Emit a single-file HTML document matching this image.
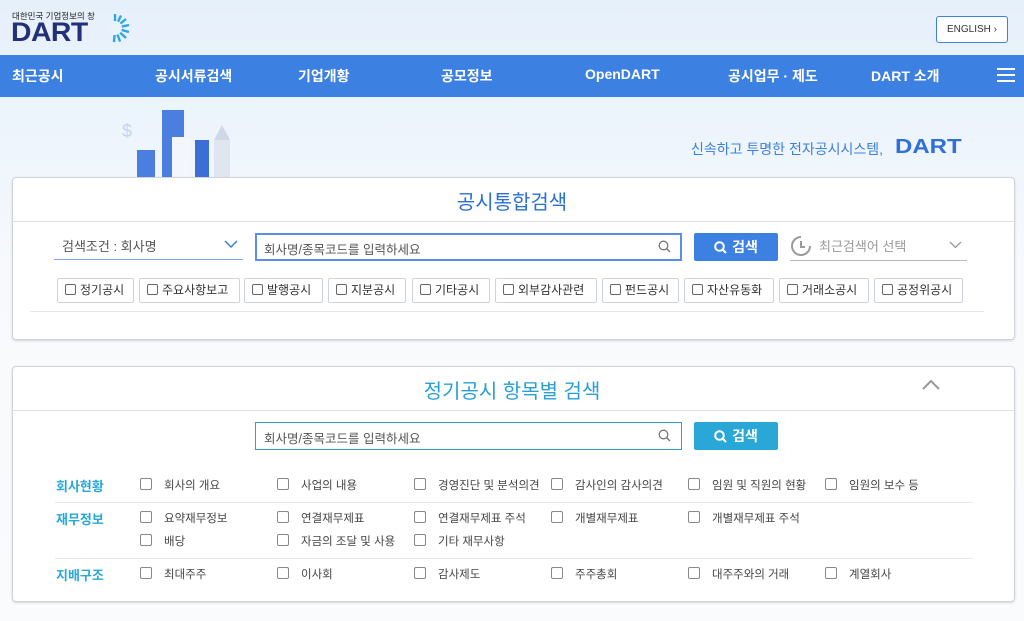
<!DOCTYPE html>
<html><head><meta charset="utf-8"><style>
*{box-sizing:border-box;margin:0;padding:0}
body{width:1024px;height:621px;overflow:hidden;font-family:"Liberation Sans","Noto Sans CJK KR",sans-serif;background:linear-gradient(#e6f0fb 0,#eef5fc 150px,#f7f9fc 260px,#fafbfd 621px);position:relative;color:#333}
.abs{position:absolute}
.nav{left:0;top:55px;width:1024px;height:42px;background:#3c80e2;color:#fff;font-size:14px;font-weight:bold}
.nav span{position:absolute;top:11px}
.card{position:absolute;left:12px;width:1003px;background:#fff;border:1px solid #cfd4db;border-radius:4px;box-shadow:0 1px 2px rgba(0,0,0,.15)}
.title{position:absolute;left:0;width:100%;text-align:center;font-size:20px;color:#2a6fd6}
.fb{position:absolute;top:278px;height:25px;border:1px solid #cfd4db;border-radius:2px;font-size:12px;color:#333;line-height:23px;padding-left:7px;background:#fff}
.cb{display:inline-block;width:11px;height:11px;border:1px solid #666;border-radius:2px;vertical-align:-1px;margin-right:4px}
.it{position:absolute;font-size:11.5px;color:#444}
.it .cb{width:12px;height:12px;border-color:#888;margin-right:12px}
.lb{position:absolute;left:56px;font-size:13px;font-weight:bold;color:#29a8d8}
.btn{position:absolute;height:28px;color:#fff;font-size:14px;font-weight:bold;text-align:center;line-height:28px;border-radius:2px}
.btn svg{vertical-align:-2px;margin-right:5px}
.inp{position:absolute;width:427px;height:28px;background:#fff;font-size:12.5px;color:#555;padding:4px 0 0 7px}
</style></head><body>
<div class="abs" style="left:12px;top:10px;font-size:8.5px;color:#222">대한민국 기업정보의 창</div>
<div class="abs" style="left:11px;top:21px;font-size:27px;font-weight:900;color:#22307a;letter-spacing:-0.5px;line-height:22px;transform:scaleX(1.05);transform-origin:left">DART</div>
<svg class="abs" style="left:100px;top:13px" width="30" height="30" viewBox="0 0 30 30"><g stroke="#2fa6e0" stroke-width="2.4">
<line x1="15" y1="15" x2="15" y2="1"/><line x1="15" y1="15" x2="21" y2="2.5"/><line x1="15" y1="15" x2="26" y2="6"/><line x1="15" y1="15" x2="29" y2="12"/><line x1="15" y1="15" x2="29" y2="19"/><line x1="15" y1="15" x2="26" y2="25"/><line x1="15" y1="15" x2="20" y2="28.5"/><line x1="15" y1="15" x2="14" y2="29"/></g><circle cx="15" cy="15" r="7" fill="#eaf2fb"/></svg>
<div class="abs" style="left:936px;top:16px;width:72px;height:27px;border:1px solid #3c80e2;border-radius:3px;background:#fff;font-size:10px;color:#333;text-align:center;line-height:25px">ENGLISH ›</div>
<div class="abs nav"><span style="left:12px">최근공시</span><span style="left:155px">공시서류검색</span><span style="left:298px">기업개황</span><span style="left:441px">공모정보</span><span style="left:585px">OpenDART</span><span style="left:728px">공시업무 · 제도</span><span style="left:871px">DART 소개</span>
<span style="left:997px;top:13px;width:18px;height:2px;background:#fff;box-shadow:0 6px 0 #fff,0 12px 0 #fff"></span></div>
<svg class="abs" style="left:110px;top:105px" width="150" height="72"><g fill="#4a7fe0"><rect x="52" y="5" width="22" height="67"/><rect x="27" y="45" width="18" height="27"/><rect x="85" y="35" width="14" height="37" fill="#3b6fd6"/></g><rect x="62" y="32" width="18" height="40" fill="#f3f6fb"/><rect x="104" y="35" width="16" height="37" fill="#dfe6f0"/><polygon points="104,35 112,20 120,35" fill="#cfd8e6"/><text x="12" y="32" font-size="18" fill="#c5d3ec" font-family="Liberation Sans">$</text></svg>
<div class="abs" style="left:691px;top:139px;font-size:14px;color:#3c7fdc">신속하고 투명한 전자공시시스템,</div>
<div class="abs" style="left:895px;top:136px;font-size:20px;font-weight:900;color:#2f6fd8;transform:scaleX(1.2);transform-origin:left">DART</div>

<div class="card" style="top:177px;height:163px"></div>
<div class="title" style="top:186px">공시통합검색</div>
<div class="abs" style="left:13px;top:221px;width:1001px;height:1px;background:#dde1e6"></div>
<div class="abs" style="left:62px;top:236px;font-size:13px;color:#555">검색조건 : 회사명</div>
<svg class="abs" style="left:224px;top:240px" width="14" height="9"><path d="M1 1 L7 7 L13 1" fill="none" stroke="#3c7fdc" stroke-width="1.5"/></svg>
<div class="abs" style="left:54px;top:259px;width:189px;height:1px;background:#7ea6e6"></div>
<div class="inp" style="left:255px;top:233px;border:2px solid #5b8ee6">회사명/종목코드를 입력하세요</div>
<svg class="abs" style="left:658px;top:240px" width="13" height="13"><circle cx="5.5" cy="5.5" r="4.3" fill="none" stroke="#777" stroke-width="1.3"/><line x1="8.5" y1="8.5" x2="12" y2="12" stroke="#777" stroke-width="1.4"/></svg>
<div class="btn" style="left:694px;top:233px;width:84px;background:#3c80e2"><svg width="13" height="13"><circle cx="5.5" cy="5.5" r="4.3" fill="none" stroke="#fff" stroke-width="2"/><line x1="8.5" y1="8.5" x2="12" y2="12" stroke="#fff" stroke-width="2"/></svg>검색</div>
<svg class="abs" style="left:790px;top:235px" width="22" height="22"><path d="M11 2 A9 9 0 1 0 20 11" fill="none" stroke="#9a9a9a" stroke-width="2"/><path d="M11 6 V12 H15" fill="none" stroke="#9a9a9a" stroke-width="2"/></svg>
<div class="abs" style="left:819px;top:236px;font-size:13px;color:#999">최근검색어 선택</div>
<svg class="abs" style="left:949px;top:241px" width="13" height="8"><path d="M1 1 L6.5 6.5 L12 1" fill="none" stroke="#999" stroke-width="1.3"/></svg>
<div class="abs" style="left:790px;top:260px;width:177px;height:1px;background:#bbb"></div>
<div class="fb" style="left:57px;width:77px"><i class="cb"></i>정기공시</div>
<div class="fb" style="left:139px;width:101px"><i class="cb"></i>주요사항보고</div>
<div class="fb" style="left:244px;width:79px"><i class="cb"></i>발행공시</div>
<div class="fb" style="left:328px;width:78px"><i class="cb"></i>지분공시</div>
<div class="fb" style="left:412px;width:78px"><i class="cb"></i>기타공시</div>
<div class="fb" style="left:495px;width:102px"><i class="cb"></i>외부감사관련</div>
<div class="fb" style="left:602px;width:77px"><i class="cb"></i>펀드공시</div>
<div class="fb" style="left:684px;width:90px"><i class="cb"></i>자산유동화</div>
<div class="fb" style="left:779px;width:90px"><i class="cb"></i>거래소공시</div>
<div class="fb" style="left:874px;width:89px"><i class="cb"></i>공정위공시</div>
<div class="abs" style="left:30px;top:311px;width:954px;height:1px;background:#e3e6ea"></div>

<div class="card" style="top:366px;height:236px"></div>
<div class="title" style="top:375px;color:#2a9fd6">정기공시 항목별 검색</div>
<svg class="abs" style="left:922px;top:380px" width="18" height="10"><path d="M1 9 L9 1 L17 9" fill="none" stroke="#999" stroke-width="2"/></svg>
<div class="abs" style="left:13px;top:410px;width:1001px;height:1px;background:#dde1e6"></div>
<div class="inp" style="left:255px;top:422px;border:1px solid #2aa0d6;padding:5px 0 0 8px">회사명/종목코드를 입력하세요</div>
<svg class="abs" style="left:658px;top:429px" width="13" height="13"><circle cx="5.5" cy="5.5" r="4.3" fill="none" stroke="#777" stroke-width="1.3"/><line x1="8.5" y1="8.5" x2="12" y2="12" stroke="#777" stroke-width="1.4"/></svg>
<div class="btn" style="left:694px;top:422px;width:84px;background:#29a8d8"><svg width="13" height="13"><circle cx="5.5" cy="5.5" r="4.3" fill="none" stroke="#fff" stroke-width="2"/><line x1="8.5" y1="8.5" x2="12" y2="12" stroke="#fff" stroke-width="2"/></svg>검색</div>

<div class="lb" style="top:476px">회사현황</div>
<div class="lb" style="top:509px">재무정보</div>
<div class="lb" style="top:565px">지배구조</div>
<div class="abs" style="left:55px;top:502px;width:918px;height:1px;background:#e3e6ea"></div>
<div class="abs" style="left:55px;top:558px;width:918px;height:1px;background:#e3e6ea"></div>

<div class="it" style="left:140px;top:477px"><i class="cb"></i>회사의 개요</div>
<div class="it" style="left:277px;top:477px"><i class="cb"></i>사업의 내용</div>
<div class="it" style="left:414px;top:477px"><i class="cb"></i>경영진단 및 분석의견</div>
<div class="it" style="left:551px;top:477px"><i class="cb"></i>감사인의 감사의견</div>
<div class="it" style="left:688px;top:477px"><i class="cb"></i>임원 및 직원의 현황</div>
<div class="it" style="left:825px;top:477px"><i class="cb"></i>임원의 보수 등</div>
<div class="it" style="left:140px;top:510px"><i class="cb"></i>요약재무정보</div>
<div class="it" style="left:277px;top:510px"><i class="cb"></i>연결재무제표</div>
<div class="it" style="left:414px;top:510px"><i class="cb"></i>연결재무제표 주석</div>
<div class="it" style="left:551px;top:510px"><i class="cb"></i>개별재무제표</div>
<div class="it" style="left:688px;top:510px"><i class="cb"></i>개별재무제표 주석</div>
<div class="it" style="left:140px;top:533px"><i class="cb"></i>배당</div>
<div class="it" style="left:277px;top:533px"><i class="cb"></i>자금의 조달 및 사용</div>
<div class="it" style="left:414px;top:533px"><i class="cb"></i>기타 재무사항</div>
<div class="it" style="left:140px;top:566px"><i class="cb"></i>최대주주</div>
<div class="it" style="left:277px;top:566px"><i class="cb"></i>이사회</div>
<div class="it" style="left:414px;top:566px"><i class="cb"></i>감사제도</div>
<div class="it" style="left:551px;top:566px"><i class="cb"></i>주주총회</div>
<div class="it" style="left:688px;top:566px"><i class="cb"></i>대주주와의 거래</div>
<div class="it" style="left:825px;top:566px"><i class="cb"></i>계열회사</div>
</body></html>
